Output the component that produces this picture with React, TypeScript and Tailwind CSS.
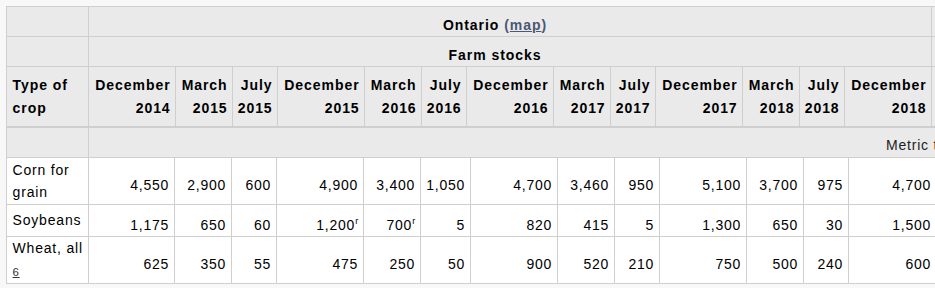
import React from "react";

const heads: [string, string][] = [
  ["December", "2014"],
  ["March", "2015"],
  ["July", "2015"],
  ["December", "2015"],
  ["March", "2016"],
  ["July", "2016"],
  ["December", "2016"],
  ["March", "2017"],
  ["July", "2017"],
  ["December", "2017"],
  ["March", "2018"],
  ["July", "2018"],
  ["December", "2018"],
];

type Val = [string, boolean?];

const rows: { label: React.ReactNode; vals: Val[] }[] = [
  {
    label: (
      <>
        Corn for
        <br />
        grain
      </>
    ),
    vals: [["4,550"], ["2,900"], ["600"], ["4,900"], ["3,400"], ["1,050"], ["4,700"], ["3,460"], ["950"], ["5,100"], ["3,700"], ["975"], ["4,700"]],
  },
  {
    label: <>Soybeans</>,
    vals: [["1,175"], ["650"], ["60"], ["1,200", true], ["700", true], ["5"], ["820"], ["415"], ["5"], ["1,300"], ["650"], ["30"], ["1,500"]],
  },
  {
    label: (
      <>
        Wheat, all
        <br />
        <span className="text-[11.5px] underline text-[#333] tracking-[0.6px]">6</span>
      </>
    ),
    vals: [["625"], ["350"], ["55"], ["475"], ["250"], ["50"], ["900"], ["520"], ["210"], ["750"], ["500"], ["240"], ["600"]],
  },
];

const hc = "bg-[#eaeaea] border-r border-b border-[#cfcfcf]";
const bc = "bg-white border-r border-b border-[#cfcfcf]";

export default function App() {
  return (
    <div
      className="w-[935px] h-[288px] overflow-hidden bg-[#f8f8f8] pl-[6px] pt-[6px] text-[14px] leading-[22.4px] text-[#000] tracking-[0.8px]"
      style={{ fontFamily: '"Liberation Sans", Arial, sans-serif' }}
    >
      <div className="flex flex-col w-max">
        {/* header */}
        <div className="grid grid-cols-[82px_87px_57px_45px_87px_57px_45px_87px_57px_45px_87px_57px_45px_87px_840px] grid-rows-[30px_30px_61px_30px] border-l border-t border-[#cfcfcf] font-bold tracking-[0.95px]">
          <div className={hc} />
          <div className={`${hc} col-span-13 flex items-center justify-center pt-[7px] pr-[30px]`}>
            <span>
              Ontario{" "}
              <span className="text-[#4a5775]">
                (<span className="underline">map</span>)
              </span>
            </span>
          </div>
          <div className={hc} />

          <div className={hc} />
          <div className={`${hc} col-span-13 flex items-center justify-center pt-[7px] pr-[30px]`}>
            Farm stocks
          </div>
          <div className={hc} />

          <div className={`${hc} border-b-2 flex items-center px-[5.6px]`}>
            <span>
              Type of
              <br />
              crop
            </span>
          </div>
          {heads.map(([a, b], i) => (
            <div key={i} className={`${hc} border-b-2 flex items-center justify-end pl-[4px] pr-[4.4px] text-right`}>
              <span>
                {a}
                <br />
                {b}
              </span>
            </div>
          ))}
          <div className={`${hc} border-b-2`} />

          <div className={hc} />
          <div className={`${hc} col-span-14 flex items-center pt-[5px] pl-[797px] font-normal tracking-[0.8px] text-[#222]`}>
            Metric tonnes
          </div>
        </div>

        {/* body */}
        <div className="grid grid-cols-[82px_86px_57px_45px_87px_57px_50px_87px_57px_45px_87px_57px_45px_88px_840px] grid-rows-[47px_32px_47px] border-l border-[#cfcfcf]">
          {rows.map((r, ri) => (
            <React.Fragment key={ri}>
              <div className={`${bc} flex items-center pl-[5.6px] pr-[2px] whitespace-nowrap`}>
                <span>{r.label}</span>
              </div>
              {r.vals.map(([v, sup], i) => (
                <div key={i} className={`${bc} flex items-center justify-end pl-[3px] pr-[4.8px] pt-[9px] whitespace-nowrap`}>
                  <span>
                    {v}
                    {sup && <span className="text-[9px] leading-none align-[6px] tracking-normal">r</span>}
                  </span>
                </div>
              ))}
              <div className={bc} />
            </React.Fragment>
          ))}
        </div>
      </div>
    </div>
  );
}
